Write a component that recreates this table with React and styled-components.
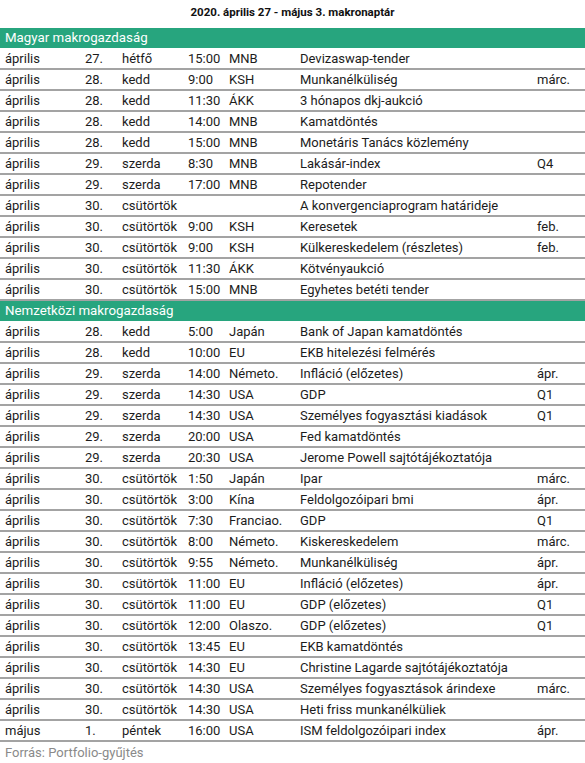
import styled, { createGlobalStyle } from 'styled-components';

const GlobalStyle = createGlobalStyle`
    body {
        margin: 0;
        background: #fff;
        font-family: Roboto, "Liberation Sans", Arial, sans-serif;
    }
`

const hungarian = [
    ['április', '27.', 'hétfő', '15:00', 'MNB', 'Devizaswap-tender', ''],
    ['április', '28.', 'kedd', '9:00', 'KSH', 'Munkanélküliség', 'márc.'],
    ['április', '28.', 'kedd', '11:30', 'ÁKK', '3 hónapos dkj-aukció', ''],
    ['április', '28.', 'kedd', '14:00', 'MNB', 'Kamatdöntés', ''],
    ['április', '28.', 'kedd', '15:00', 'MNB', 'Monetáris Tanács közlemény', ''],
    ['április', '29.', 'szerda', '8:30', 'MNB', 'Lakásár-index', 'Q4'],
    ['április', '29.', 'szerda', '17:00', 'MNB', 'Repotender', ''],
    ['április', '30.', 'csütörtök', '', '', 'A konvergenciaprogram határideje', ''],
    ['április', '30.', 'csütörtök', '9:00', 'KSH', 'Keresetek', 'feb.'],
    ['április', '30.', 'csütörtök', '9:00', 'KSH', 'Külkereskedelem (részletes)', 'feb.'],
    ['április', '30.', 'csütörtök', '11:30', 'ÁKK', 'Kötvényaukció', ''],
    ['április', '30.', 'csütörtök', '15:00', 'MNB', 'Egyhetes betéti tender', ''],
]

const international = [
    ['április', '28.', 'kedd', '5:00', 'Japán', 'Bank of Japan kamatdöntés', ''],
    ['április', '28.', 'kedd', '10:00', 'EU', 'EKB hitelezési felmérés', ''],
    ['április', '29.', 'szerda', '14:00', 'Németo.', 'Infláció (előzetes)', 'ápr.'],
    ['április', '29.', 'szerda', '14:30', 'USA', 'GDP', 'Q1'],
    ['április', '29.', 'szerda', '14:30', 'USA', 'Személyes fogyasztási kiadások', 'Q1'],
    ['április', '29.', 'szerda', '20:00', 'USA', 'Fed kamatdöntés', ''],
    ['április', '29.', 'szerda', '20:30', 'USA', 'Jerome Powell sajtótájékoztatója', ''],
    ['április', '30.', 'csütörtök', '1:50', 'Japán', 'Ipar', 'márc.'],
    ['április', '30.', 'csütörtök', '3:00', 'Kína', 'Feldolgozóipari bmi', 'ápr.'],
    ['április', '30.', 'csütörtök', '7:30', 'Franciao.', 'GDP', 'Q1'],
    ['április', '30.', 'csütörtök', '8:00', 'Németo.', 'Kiskereskedelem', 'márc.'],
    ['április', '30.', 'csütörtök', '9:55', 'Németo.', 'Munkanélküliség', 'ápr.'],
    ['április', '30.', 'csütörtök', '11:00', 'EU', 'Infláció (előzetes)', 'ápr.'],
    ['április', '30.', 'csütörtök', '11:00', 'EU', 'GDP (előzetes)', 'Q1'],
    ['április', '30.', 'csütörtök', '12:00', 'Olaszo.', 'GDP (előzetes)', 'Q1'],
    ['április', '30.', 'csütörtök', '13:45', 'EU', 'EKB kamatdöntés', ''],
    ['április', '30.', 'csütörtök', '14:30', 'EU', 'Christine Lagarde sajtótájékoztatója', ''],
    ['április', '30.', 'csütörtök', '14:30', 'USA', 'Személyes fogyasztások árindexe', 'márc.'],
    ['április', '30.', 'csütörtök', '14:30', 'USA', 'Heti friss munkanélküliek', ''],
    ['május', '1.', 'péntek', '16:00', 'USA', 'ISM feldolgozóipari index', 'ápr.'],
]

// section header + its rows
const Section = ({title, rows}) => (
    <>
        <SectionHeader>{title}</SectionHeader>
        {rows.map((row, i) => (
            <Row key={i}>
                {row.map((cell, j) => <Cell key={j}>{cell}</Cell>)}
            </Row>
        ))}
    </>
)

const App = () => {
    return (
        <Page>
            <GlobalStyle />
            <Title>2020. április 27 - május 3. makronaptár</Title>
            <Table>
                <Section title="Magyar makrogazdaság" rows={hungarian} />
                <Section title="Nemzetközi makrogazdaság" rows={international} />
            </Table>
            <Source>Forrás: Portfolio-gyűjtés</Source>
        </Page>
    )
}

const Page = styled.div`
    width: 585px;
    height: 763px;
    display: flex;
    flex-direction: column;
    background: #fff;
`

const Title = styled.h1`
    margin: 0;
    height: 28px;
    line-height: 25px;
    text-align: center;
    font-size: 11.5px;
    font-weight: 700;
    color: #111;
`

const Table = styled.div`
    display: flex;
    flex-direction: column;
`

const SectionHeader = styled.div`
    height: 20px;
    line-height: 20px;
    margin-bottom: 1px;
    padding-left: 5px;
    background: #27a57e;
    color: #fff;
    font-size: 13.3px;
`

const Row = styled.div`
    display: grid;
    grid-template-columns: 80px 37px 66px 41px 71px 237px 1fr;
    height: 19px;
    line-height: 19px;
    padding-left: 5px;
    border-bottom: 2px solid #a3a3a3;
    font-size: 13px;
    color: #1c1c1c;
`

const Cell = styled.span`
    white-space: nowrap;
`

const Source = styled.div`
    padding: 1px 0 0 5px;
    line-height: 19px;
    font-size: 13px;
    color: #8a8a8a;
`

export default App
